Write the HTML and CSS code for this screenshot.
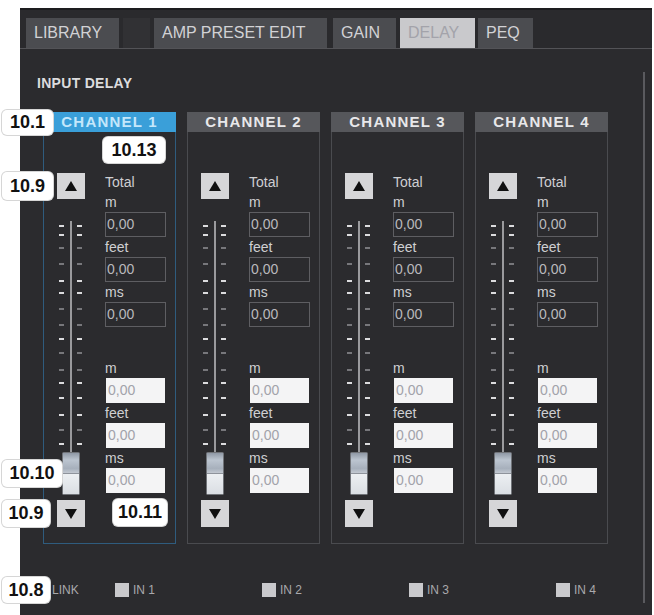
FILE: index.html
```html
<!DOCTYPE html>
<html>
<head>
<meta charset="utf-8">
<title>Input Delay</title>
<link rel="stylesheet" href="styles.css">
</head>
<body>
<svg class="defs" width="0" height="0" aria-hidden="true">
  <defs>
    <linearGradient id="kg" x1="0" y1="0" x2="0" y2="1">
      <stop offset="0" stop-color="#8c95a2"/>
      <stop offset="0.18" stop-color="#bcc5d0"/>
      <stop offset="0.38" stop-color="#a7b0bc"/>
      <stop offset="0.49" stop-color="#c3c9d1"/>
      <stop offset="0.52" stop-color="#eceff2"/>
      <stop offset="1" stop-color="#dadee3"/>
    </linearGradient>
    <symbol id="fader" viewBox="0 0 28 301">
      <rect x="13" y="22" width="2" height="232" fill="#9a9a9d"/>
      <g fill="#dcdcde">
        <rect x="2" y="26" width="5" height="2"/><rect x="20" y="26" width="5" height="2"/>
        <rect x="2" y="35" width="5" height="2"/><rect x="20" y="35" width="5" height="2"/>
        <rect x="2" y="81" width="5" height="2"/><rect x="20" y="81" width="5" height="2"/>
        <rect x="2" y="93" width="5" height="2"/><rect x="20" y="93" width="5" height="2"/>
        <rect x="2" y="139" width="5" height="2"/><rect x="20" y="139" width="5" height="2"/>
        <rect x="2" y="183" width="5" height="2"/><rect x="20" y="183" width="5" height="2"/>
        <rect x="2" y="198" width="5" height="2"/><rect x="20" y="198" width="5" height="2"/>
        <rect x="2" y="215" width="5" height="2"/><rect x="20" y="215" width="5" height="2"/>
        <rect x="2" y="244" width="5" height="2"/><rect x="20" y="244" width="5" height="2"/>
      </g>
      <g fill="#77777b">
        <rect x="2" y="48" width="5" height="2"/><rect x="20" y="48" width="5" height="2"/>
        <rect x="2" y="64" width="5" height="2"/><rect x="20" y="64" width="5" height="2"/>
        <rect x="2" y="109" width="5" height="2"/><rect x="20" y="109" width="5" height="2"/>
        <rect x="2" y="125" width="5" height="2"/><rect x="20" y="125" width="5" height="2"/>
        <rect x="2" y="153" width="5" height="2"/><rect x="20" y="153" width="5" height="2"/>
        <rect x="2" y="170" width="5" height="2"/><rect x="20" y="170" width="5" height="2"/>
        <rect x="2" y="230" width="5" height="2"/><rect x="20" y="230" width="5" height="2"/>
      </g>
      <rect x="5.5" y="253.5" width="17" height="42" rx="1" fill="url(#kg)" stroke="#707378"/>
      <line x1="6" y1="274.5" x2="22" y2="274.5" stroke="#8e939b"/>
    </symbol>
    <symbol id="tri-up" viewBox="0 0 12 10"><polygon points="6,0 12,10 0,10" fill="#111"/></symbol>
    <symbol id="tri-down" viewBox="0 0 12 10"><polygon points="0,0 12,0 6,10" fill="#111"/></symbol>
  </defs>
</svg>

<div class="panel">
  <div class="topband"></div>
  <div class="tabbar">
    <div class="tab t-lib">LIBRARY</div>
    <div class="tab t-spacer"></div>
    <div class="tab t-amp">AMP PRESET EDIT</div>
    <div class="tab t-gain">GAIN</div>
    <div class="tab t-delay">DELAY</div>
    <div class="tab t-peq">PEQ</div>
  </div>
  <div class="content">
    <div class="main">
      <div class="section-title">INPUT DELAY</div>
      <div class="channels">

        <div class="channel selected">
          <div class="ch-head">CHANNEL 1</div>
          <div class="ch-body">
            <div class="ctrl">
              <div class="btn"><svg class="tri"><use href="#tri-up"/></svg></div>
              <svg class="slider"><use href="#fader"/></svg>
              <div class="btn down"><svg class="tri"><use href="#tri-down"/></svg></div>
            </div>
            <div class="fields">
              <div class="lbl">Total</div>
              <div class="lbl">m</div>
              <div class="inp dark">0,00</div>
              <div class="lbl">feet</div>
              <div class="inp dark">0,00</div>
              <div class="lbl">ms</div>
              <div class="inp dark">0,00</div>
              <div class="fgap"></div>
              <div class="lbl">m</div>
              <div class="inp light">0,00</div>
              <div class="lbl">feet</div>
              <div class="inp light">0,00</div>
              <div class="lbl">ms</div>
              <div class="inp light">0,00</div>
            </div>
          </div>
        </div>

        <div class="channel">
          <div class="ch-head">CHANNEL 2</div>
          <div class="ch-body">
            <div class="ctrl">
              <div class="btn"><svg class="tri"><use href="#tri-up"/></svg></div>
              <svg class="slider"><use href="#fader"/></svg>
              <div class="btn down"><svg class="tri"><use href="#tri-down"/></svg></div>
            </div>
            <div class="fields">
              <div class="lbl">Total</div>
              <div class="lbl">m</div>
              <div class="inp dark">0,00</div>
              <div class="lbl">feet</div>
              <div class="inp dark">0,00</div>
              <div class="lbl">ms</div>
              <div class="inp dark">0,00</div>
              <div class="fgap"></div>
              <div class="lbl">m</div>
              <div class="inp light">0,00</div>
              <div class="lbl">feet</div>
              <div class="inp light">0,00</div>
              <div class="lbl">ms</div>
              <div class="inp light">0,00</div>
            </div>
          </div>
        </div>

        <div class="channel">
          <div class="ch-head">CHANNEL 3</div>
          <div class="ch-body">
            <div class="ctrl">
              <div class="btn"><svg class="tri"><use href="#tri-up"/></svg></div>
              <svg class="slider"><use href="#fader"/></svg>
              <div class="btn down"><svg class="tri"><use href="#tri-down"/></svg></div>
            </div>
            <div class="fields">
              <div class="lbl">Total</div>
              <div class="lbl">m</div>
              <div class="inp dark">0,00</div>
              <div class="lbl">feet</div>
              <div class="inp dark">0,00</div>
              <div class="lbl">ms</div>
              <div class="inp dark">0,00</div>
              <div class="fgap"></div>
              <div class="lbl">m</div>
              <div class="inp light">0,00</div>
              <div class="lbl">feet</div>
              <div class="inp light">0,00</div>
              <div class="lbl">ms</div>
              <div class="inp light">0,00</div>
            </div>
          </div>
        </div>

        <div class="channel">
          <div class="ch-head">CHANNEL 4</div>
          <div class="ch-body">
            <div class="ctrl">
              <div class="btn"><svg class="tri"><use href="#tri-up"/></svg></div>
              <svg class="slider"><use href="#fader"/></svg>
              <div class="btn down"><svg class="tri"><use href="#tri-down"/></svg></div>
            </div>
            <div class="fields">
              <div class="lbl">Total</div>
              <div class="lbl">m</div>
              <div class="inp dark">0,00</div>
              <div class="lbl">feet</div>
              <div class="inp dark">0,00</div>
              <div class="lbl">ms</div>
              <div class="inp dark">0,00</div>
              <div class="fgap"></div>
              <div class="lbl">m</div>
              <div class="inp light">0,00</div>
              <div class="lbl">feet</div>
              <div class="inp light">0,00</div>
              <div class="lbl">ms</div>
              <div class="inp light">0,00</div>
            </div>
          </div>
        </div>

      </div>
      <div class="link-row">
        <div class="link-lbl">LINK</div>
        <div class="link-item"><span class="cb"></span><span>IN 1</span></div>
        <div class="link-item"><span class="cb"></span><span>IN 2</span></div>
        <div class="link-item"><span class="cb"></span><span>IN 3</span></div>
        <div class="link-item last"><span class="cb"></span><span>IN 4</span></div>
      </div>
    </div>
    <div class="scroll"></div>
  </div>
</div>

<div class="callout c-101">10.1</div>
<div class="callout c-1013">10.13</div>
<div class="callout c-109a">10.9</div>
<div class="callout c-1010">10.10</div>
<div class="callout c-109b">10.9</div>
<div class="callout c-1011">10.11</div>
<div class="callout c-108">10.8</div>
</body>
</html>
```

FILE: styles.css
```css
html, body {
  margin: 0;
  padding: 0;
}
body {
  width: 654px;
  height: 615px;
  overflow: hidden;
  position: relative;
  background: #ffffff;
  font-family: "Liberation Sans", Arial, sans-serif;
}
.defs {
  position: absolute;
  width: 0;
  height: 0;
}
.panel {
  margin-left: 20px;
  padding-top: 8px;
  width: 632px;
  height: 615px;
  box-sizing: border-box;
  display: flex;
  flex-direction: column;
  background: linear-gradient(#ffffff 0 8px, #2b2b2e 8px);
}
.topband {
  height: 2px;
  background: #1d1d1f;
}
.tabbar {
  height: 39px;
  box-sizing: border-box;
  padding-top: 8px;
  padding-left: 6px;
  display: flex;
  gap: 4px;
  background: #2a2a2d;
  border-bottom: 1px solid #535357;
}
.tab {
  height: 30px;
  line-height: 30px;
  padding-left: 8px;
  box-sizing: border-box;
  background: #4b4c50;
  color: #d2d2d5;
  font-size: 16px;
  white-space: nowrap;
}
.t-lib { width: 93px; }
.t-spacer { width: 27px; background: #313134; }
.t-amp { width: 173px; }
.t-gain { width: 63px; margin-left: 2px; }
.t-delay { width: 75px; background: #c9c9cc; color: #a3a3aa; }
.t-peq { width: 55px; margin-left: -1px; }

.content {
  flex: 1;
  display: flex;
  min-width: 0;
}
.main {
  flex: 1;
  min-width: 0;
  padding-left: 17px;
}
.section-title {
  margin-top: 26px;
  height: 16px;
  line-height: 16px;
  font-size: 14px;
  font-weight: bold;
  letter-spacing: 0.3px;
  color: #dcdcde;
}
.channels {
  display: flex;
  gap: 11px;
  margin-left: 6px;
  margin-top: 21px;
}
.channel {
  width: 133px;
}
.ch-head {
  height: 20px;
  line-height: 20px;
  text-align: center;
  background: #56575b;
  color: #e8e8ea;
  font-size: 15px;
  font-weight: bold;
  letter-spacing: 1.2px;
  white-space: nowrap;
}
.ch-body {
  height: 412px;
  box-sizing: border-box;
  border: 1px solid #4a4b4f;
  border-top: none;
  display: flex;
}
.selected .ch-head {
  background: #3a9fd9;
  color: #c4e7fb;
}
.selected .ch-body {
  border-color: #2f5c7e;
}
.ctrl {
  margin-left: 13px;
  width: 28px;
  padding-top: 41px;
  display: flex;
  flex-direction: column;
}
.btn {
  width: 28px;
  height: 26px;
  background: #d6d6d8;
  display: flex;
  align-items: center;
  justify-content: center;
}
.btn.down {
  height: 27px;
}
.tri {
  width: 12px;
  height: 10px;
  display: block;
}
.slider {
  width: 28px;
  height: 301px;
  display: block;
}
.fields {
  margin-left: 20px;
  width: 61px;
  padding-top: 40px;
}
.lbl {
  height: 20px;
  line-height: 20px;
  font-size: 14px;
  color: #cfcfd2;
}
.inp {
  height: 25px;
  line-height: 23px;
  box-sizing: border-box;
  padding-left: 1px;
  font-size: 14px;
}
.inp.dark {
  border: 1px solid #5e5e62;
  color: #b9b9bc;
}
.inp.light {
  width: 59px;
  margin-left: 1px;
  border: 1px solid #f4f4f5;
  background: #f4f4f5;
  color: #a2a2aa;
}
.fgap {
  height: 31px;
}
.link-row {
  margin-top: 36px;
  height: 20px;
  padding-left: 15px;
  display: flex;
  align-items: center;
  font-size: 12px;
  color: #a9a9ac;
}
.link-lbl {
  width: 63px;
}
.link-item {
  width: 147px;
  display: flex;
  align-items: center;
  gap: 4px;
}
.link-item.last {
  width: auto;
}
.cb {
  width: 14px;
  height: 14px;
  background: #c9c9cc;
}
.scroll {
  width: 2px;
  margin-top: 23px;
  margin-bottom: 12px;
  margin-right: 7px;
  background: #5a5a5e;
}
.callout {
  position: absolute;
  display: flex;
  align-items: center;
  justify-content: center;
  background: #ffffff;
  border-radius: 5px;
  box-shadow: 0 0 0 1px #d6d6d6;
  color: #111111;
  font-size: 18px;
  font-weight: bold;
}
.c-101 { left: 2px; top: 110px; width: 51px; height: 25px; }
.c-1013 { left: 103px; top: 137px; width: 62px; height: 26px; }
.c-109a { left: 2px; top: 172px; width: 51px; height: 28px; }
.c-1010 { left: 2px; top: 460px; width: 60px; height: 27px; }
.c-109b { left: 2px; top: 500px; width: 48px; height: 27px; }
.c-1011 { left: 113px; top: 499px; width: 54px; height: 27px; }
.c-108 { left: 2px; top: 577px; width: 48px; height: 26px; }
```
